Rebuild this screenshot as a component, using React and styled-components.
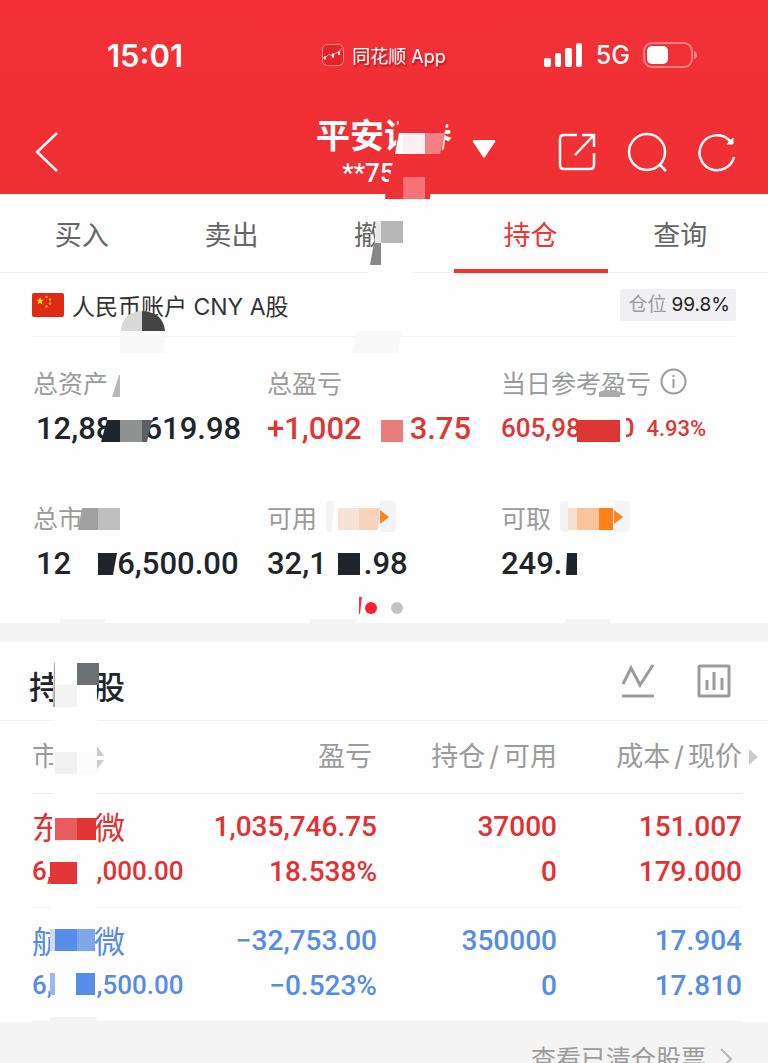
import React from 'react';
import styled, { createGlobalStyle } from 'styled-components';

const GlobalStyle = createGlobalStyle`
    * {
        box-sizing: border-box;
    }
    body {
        margin: 0;
        background: #f4f4f4;
        font-family: Inter, "Noto Sans CJK SC", sans-serif;
    }
    button {
        border: 0;
        padding: 0;
        background: none;
        font-family: inherit;
        cursor: pointer;
    }
`
const Page = styled.div`
    width: 100%;
    height: 100vh;
    overflow: hidden;
`
const Header = styled.header`
    position: relative;
    z-index: 1;
    color: white;
    background: linear-gradient(#f33038, #ef3033);
`
const StatusBar = styled.div`
    height: 110px;
    display: grid;
    grid-template-columns: 1fr auto 1fr;
    align-items: center;
    padding: 0 71px;
`
const Clock = styled.div`
    padding-left: 36px;
    font-size: 31px;
    font-weight: 600;
`
const AppName = styled.div`
    display: flex;
    align-items: center;
    gap: 8px;
    font-size: 18px;
    text-shadow: 1px 2px 2px rgba(90, 0, 0, 0.5);
`
const Signals = styled.div`
    display: flex;
    align-items: center;
    justify-content: flex-end;
    gap: 13px;
    font-size: 25px;
    font-weight: 500;
`
const NavBar = styled.div`
    height: 84px;
    display: grid;
    grid-template-columns: 1fr auto 1fr;
    align-items: center;
    padding: 0 31px 0 35px;
`
const IconButton = styled.button`
    display: flex;
    color: inherit;
`
const Account = styled.button`
    display: flex;
    align-items: center;
    gap: 20px;
    padding-left: 40px;
    color: inherit;
`
const AccountName = styled.div`
    font-size: 34px;
    line-height: 42px;
    font-weight: 700;
`
const AccountNumber = styled.div`
    padding-left: 26px;
    text-align: left;
    font-family: Roboto, sans-serif;
    font-size: 26px;
    line-height: 32px;
    font-weight: 500;
`
const NavActions = styled.div`
    display: flex;
    justify-content: flex-end;
    gap: 30px;
`
const Panel = styled.section`
    position: relative;
    background: #fefefe;
`
const Tabs = styled.nav`
    height: 79px;
    display: flex;
    padding: 0 13px 0 7px;
    border-bottom: 1px solid #efefef;
`
const Tab = styled.button`
    flex: 1 1 0;
    min-width: 0;
    height: 79px;
    display: flex;
    flex-direction: column;
    align-items: center;
    font-size: 27px;
    line-height: 84px;
    color: ${props => props.$active ? '#f03433' : '#666'};
    &::after {
        content: '';
        width: 154px;
        height: 4px;
        margin-top: -9px;
        flex-shrink: 0;
        background: ${props => props.$active ? '#f03433' : 'transparent'};
    }
`
const AccountRow = styled.div`
    height: 64px;
    margin: 0 32px;
    display: flex;
    align-items: center;
    gap: 8px;
    border-bottom: 1px solid #f4f4f4;
    font-size: 23px;
    color: #333;
`
const Position = styled.div`
    margin-left: auto;
    display: flex;
    gap: 5px;
    padding: 0 6px 0 8px;
    border-radius: 3px;
    background: #f0f0f2;
    font-size: 19px;
    line-height: 32px;
    color: #222;
`
const Muted = styled.span`
    color: #9b9b9b;
`
const Stats = styled.div`
    display: grid;
    grid-template-columns: repeat(3, 1fr);
    row-gap: 42px;
    padding: 21px 33px 0;
`
const StatLabel = styled.div`
    height: 47px;
    display: flex;
    align-items: center;
    gap: 9px;
    font-size: 25px;
    color: #9b9b9b;
    white-space: nowrap;
`
const StatValue = styled.div`
    height: 46px;
    padding-left: ${props => props.$indent ? 3 : 0}px;
    display: flex;
    align-items: center;
    font-family: Roboto, sans-serif;
    font-size: ${props => props.$small ? 26 : 31}px;
    font-weight: 500;
    color: ${props => props.$up ? '#dd3735' : '#20252b'};
    white-space: pre;
`
const Percent = styled.span`
    margin-left: 12px;
    font-size: 22px;
`
const Hidden = styled.span`
    display: inline-block;
    width: ${props => props.$w}px;
`
const Tag = styled.button`
    width: 70px;
    height: 31px;
    padding-right: 7px;
    display: flex;
    align-items: center;
    justify-content: flex-end;
    border-radius: 4px;
    background: #f4f4f4;
`
const Dots = styled.div`
    height: 37px;
    display: flex;
    justify-content: center;
    align-items: center;
    gap: 14px;
    padding-top: 7px;
`
const Dot = styled.span`
    width: 12px;
    height: 12px;
    border-radius: 50%;
    background: ${props => props.$active ? '#fd2036' : '#c2c2c2'};
`
const Band = styled.div`
    height: 19px;
    background: #f4f4f4;
`
const HoldingsHead = styled.div`
    height: 79px;
    display: flex;
    align-items: center;
    gap: 42px;
    padding: 0 37px 0 29px;
    border-bottom: 1px solid #f1f1f1;
`
const HoldingsTitle = styled.h2`
    margin: 0 auto 0 0;
    padding-top: 8px;
    font-size: 32px;
    font-weight: 500;
    color: #20252b;
`
const TableWrap = styled.div`
    padding: 0 26px 0 32px;
`
const Table = styled.table`
    width: 100%;
    table-layout: fixed;
    border-collapse: separate;
    border-spacing: 0;
`
const HeadCell = styled.th`
    position: relative;
    width: ${props => props.$w ? props.$w + 'px' : 'auto'};
    height: 73px;
    padding: 0 ${props => props.$inset || 0}px 0 0;
    border-bottom: 1px solid #ececec;
    font-size: 27px;
    font-weight: 400;
    line-height: 36px;
    color: #9b9b9b;
    white-space: nowrap;
    text-align: ${props => props.$w ? 'right' : 'left'};
`
const Slash = styled.span`
    padding: 0 4px;
`
const More = styled.span`
    position: absolute;
    right: -16px;
    top: 0;
    height: 72px;
    display: flex;
    align-items: center;
`
const Cell = styled.td`
    padding: 10px 0 13px;
    border-bottom: 1px solid #f3f3f3;
    font-family: Roboto, "Noto Sans CJK SC", sans-serif;
    font-size: 28px;
    font-weight: 500;
    line-height: 45px;
    text-align: right;
    color: ${props => props.$up ? '#e23133' : '#578ce6'};
    white-space: nowrap;
`
const StockCell = styled(Cell)`
    text-align: left;
    font-size: 26px;
`
const StockName = styled.div`
    height: 45px;
    font-size: 31px;
    line-height: 49px;
    font-weight: 400;
`
const Footer = styled.footer`
    display: flex;
    justify-content: flex-end;
    padding: 17px 36px;
`
const FooterLink = styled.a`
    display: flex;
    align-items: center;
    gap: 14px;
    font-size: 25px;
    line-height: 40px;
    color: #9b9b9b;
    text-decoration: none;
`
const MosaicSvg = styled.svg`
    position: absolute;
    left: 0;
    top: 0;
    overflow: visible;
    pointer-events: none;
`

// privacy blocks lying over the sensitive values; [points, colour]
const headerBlocks = [
    ['399,118 447,118 441,155 395,155', '#f03036'],
    ['395,154 399,133 403,133 403,154', '#ffffff'],
    ['403,133 425,133 425,154 403,154', '#fdf0f1'],
    ['425,133 445,133 440,154 425,154', '#f58084'],
    ['393,162 432,162 430,199 385,199 386,186 388,184', '#ef3034'],
    ['403,177 425,177 425,199 403,199', '#f77276'],
]
const panelBlocks = [
    ['377,219 404,219 404,270 372,270', '#fefefe'],
    ['376,221 381,221 381,243 375,243', '#e8e8e8'],
    ['381,221 403,221 403,243 381,243', '#b7b7b7'],
    ['374,243 381,243 381,265 370,265', '#888888'],
    ['368,270 413,270 413,275 368,275', '#fefefe'],
    ['120,331 165,331 165,353 120,353', '#f9f9f9'],
    ['357,331 402,331 398,353 351,353', '#f9f9f9'],
    ['119,375 120,375 120,397 112,397', '#b9b9b9'],
    ['107,412 155,412 152,421 107,421', '#fefefe'],
    ['107,420 120,420 120,442 101,442', '#20252b'],
    ['120,420 142,420 142,442 120,442', '#909192'],
    ['142,420 152,420 147,442 142,442', '#5d5f62'],
    ['381,420 403,420 403,442 381,442', '#e87d7c'],
    ['599,392 605,390 615,390 620,392 620,397 599,397', '#ababab'],
    ['577,420 620,420 620,442 577,442', '#dd3735'],
    ['620,416 626,416 626,442 620,442', '#fefefe'],
    ['82,508 98,508 98,530 78,530', '#a0a0a0'],
    ['98,508 120,508 120,530 98,530', '#bfbfbf'],
    ['98,553 117,553 113,575 98,575', '#20252b'],
    ['335,500 380,500 380,533 331,533', '#fefefe'],
    ['338,508 359,508 359,530 338,530', '#f5e3d5'],
    ['359,508 380,508 378,530 359,530', '#f6d4bc'],
    ['338,553 360,553 360,575 338,575', '#20252b'],
    ['568,500 614,500 614,533 568,533', '#fefefe'],
    ['568,508 577,508 577,530 568,530', '#f5e0d0'],
    ['577,508 599,508 599,530 577,530', '#f8c49c'],
    ['599,508 613,508 613,530 599,530', '#ff7f18'],
    ['567,553 577,553 577,575 566,575', '#20252b'],
    ['359,597 362,597 360,614 359,614', '#f9344a'],
    ['60,619 105,619 105,623 60,623', '#f4f4f4'],
    ['310,619 357,619 357,623 310,623', '#f4f4f4'],
    ['565,619 610,619 610,623 565,623', '#f4f4f4'],
]
const holdingsBlocks = [
    ['53,663 97,663 97,715 53,715', '#fefefe'],
    ['54,663 55,663 55,707 53,707', '#a9a9a9'],
    ['77,663 99,663 99,685 77,685', '#6b7073'],
    ['55,685 77,685 77,707 55,707', '#f3f3f3'],
    ['53,715 97,715 97,798 53,798', '#fefefe'],
    ['55,752 77,752 77,774 55,774', '#f1f1f1'],
    ['77,752 97,752 97,774 77,774', '#fbfbfb'],
    ['97,746 104,756 97,756', '#cccccc'],
    ['97,760 104,760 97,769', '#cccccc'],
    ['52,812 96,812 96,845 52,845', '#fefefe'],
    ['55,818 77,818 77,840 55,840', '#e75c5d'],
    ['77,818 96,818 96,840 77,840', '#e23435'],
    ['50,862 77,862 77,884 50,884', '#e23739'],
    ['50,904 95,904 95,910 50,910', '#fefefe'],
    ['50,925 95,925 95,960 50,960', '#fefefe'],
    ['50,929 55,929 55,951 50,951', '#cfdcf6'],
    ['55,929 77,929 77,951 55,951', '#578ce9'],
    ['77,929 95,929 95,951 77,951', '#7fa5ec'],
    ['50,973 55,973 55,995 50,995', '#9ab8f1'],
    ['76,973 95,973 95,995 76,995', '#578ce9'],
    ['50,1017 97,1017 96,1022 50,1022', '#f4f4f4'],
]

const tabs = ['买入', '卖出', '撤', '持仓', '查询']

const holdings = [
    { first: '东', last: '微', tail: ',000.00', profit: '1,035,746.75', rate: '18.538%', amount: '37000', usable: '0', cost: '151.007', price: '179.000', up: true },
    { first: '航', last: '微', tail: ',500.00', profit: '−32,753.00', rate: '−0.523%', amount: '350000', usable: '0', cost: '17.904', price: '17.810', up: false },
]

function Mosaic({ top, blocks, children }) {
    return (
        <MosaicSvg width="768" height="100" viewBox={`0 ${top} 768 100`} aria-hidden="true">
            {blocks.map(([points, fill], index) => <polygon key={'block' + index} points={points} fill={fill} />)}
            {children}
        </MosaicSvg>
    )
}

function Flag() {
    return (
        <svg width="32" height="24" viewBox="0 0 32 24">
            <rect width="32" height="24" rx="2" fill="#df2a14" />
            <path d="M8 4l1 2.800h3L9.600 8.600l.9 2.900L8 9.700l-2.500 1.800.9-2.900L4 6.800h3z" fill="#ffde00" />
            <g fill="#f6a913">
                <circle cx="14.500" cy="4" r="1.200" />
                <circle cx="18" cy="6.500" r="1.200" />
                <circle cx="18" cy="10.500" r="1.200" />
                <circle cx="14.500" cy="13.500" r="1.200" />
            </g>
        </svg>
    )
}

function OrangeArrow() {
    return (
        <svg width="9" height="14" viewBox="0 0 9 14">
            <path d="M0 0l9 7-9 7z" fill="#fd8420" />
        </svg>
    )
}

export default function App() {
    return (
        <Page>
            <GlobalStyle />
            <Header>
                <StatusBar>
                    <Clock>15:01</Clock>
                    <AppName>
                        <svg width="22" height="22" viewBox="0 0 22 22" fill="none">
                            <rect x="0.500" y="0.500" width="21" height="21" rx="5" fill="#e62328" stroke="#fa8a8c" />
                            <path d="M1 14l3-1 3-3 3 2 4-3 3-1 3-4" stroke="#f9b0b0" />
                            <path d="M3 12.500v3M11 9.500v4M17 7v4" stroke="#fff" strokeWidth="2" />
                        </svg>
                        <span>同花顺 App</span>
                    </AppName>
                    <Signals>
                        <svg width="39" height="24" viewBox="0 0 39 24" fill="#fff">
                            <rect x="0" y="15" width="7" height="9" rx="2" />
                            <rect x="11" y="10" width="6" height="14" rx="2" />
                            <rect x="21" y="5" width="7" height="19" rx="2" />
                            <rect x="32" y="0" width="6" height="24" rx="2" />
                        </svg>
                        <span>5G</span>
                        <svg width="54" height="26" viewBox="0 0 54 26" fill="none">
                            <rect x="1" y="1" width="48" height="24" rx="8" stroke="#f98184" strokeWidth="2" />
                            <rect x="4" y="4" width="21" height="18" rx="5" fill="#fff" />
                            <path d="M51 9q3 1 3 4t-3 4z" fill="#f98184" />
                        </svg>
                    </Signals>
                </StatusBar>
                <NavBar>
                    <IconButton aria-label="返回">
                        <svg width="24" height="40" viewBox="0 0 24 40" fill="none" stroke="#fff" strokeWidth="2.500">
                            <path d="M22 1L2 20l20 19" />
                        </svg>
                    </IconButton>
                    <Account>
                        <div>
                            <AccountName>平安证券</AccountName>
                            <AccountNumber>**75</AccountNumber>
                        </div>
                        <svg width="24" height="26" viewBox="0 0 24 26">
                            <path d="M2 1h20q2 0 1 2L13 18q-1 1-2 0L1 3q-1-2 1-2z" fill="#fff" />
                        </svg>
                    </Account>
                    <NavActions>
                        <IconButton aria-label="分享">
                            <svg width="40" height="40" viewBox="0 0 40 40" fill="none" stroke="#fff" strokeWidth="2.500">
                                <path d="M20 3H7q-4 0-4 4v26q0 4 4 4h26q4 0 4-4V21M25 3h12v12M37 3L18 23" />
                            </svg>
                        </IconButton>
                        <IconButton aria-label="搜索">
                            <svg width="40" height="40" viewBox="0 0 40 40" fill="none" stroke="#fff" strokeWidth="2.500">
                                <circle cx="20" cy="20" r="18" />
                                <path d="M32 32l7 7" />
                            </svg>
                        </IconButton>
                        <IconButton aria-label="刷新">
                            <svg width="40" height="40" viewBox="0 0 40 40" fill="none" stroke="#fff" strokeWidth="2.500">
                                <path d="M37 25A17.500 17.500 0 1 1 32 8l3 3" />
                                <path d="M36 6v6h-6z" fill="#fff" strokeWidth="1" />
                            </svg>
                        </IconButton>
                    </NavActions>
                </NavBar>
                <Mosaic top={0} blocks={headerBlocks} />
            </Header>
            <Panel>
                <Tabs>
                    {tabs.map((name, index) => (
                        <Tab key={'tab' + index} $active={name === '持仓'}>
                            <span>{name}{name === '撤' ? <Hidden $w={27} /> : null}</span>
                        </Tab>
                    ))}
                </Tabs>
                <AccountRow>
                    <Flag />
                    <span>人民币账户 CNY A股</span>
                    <Position><Muted>仓位</Muted>99.8%</Position>
                </AccountRow>
                <Stats>
                    <div>
                        <StatLabel>总资产</StatLabel>
                        <StatValue $indent>12,88<Hidden $w={31} />619.98</StatValue>
                    </div>
                    <div>
                        <StatLabel>总盈亏</StatLabel>
                        <StatValue $up>+1,002<Hidden $w={48} />3.75</StatValue>
                    </div>
                    <div>
                        <StatLabel>
                            当日参考盈亏
                            <svg width="27" height="27" viewBox="0 0 27 27" fill="none" stroke="#9b9b9b" strokeWidth="2">
                                <circle cx="13.500" cy="13.500" r="12" />
                                <path d="M13.500 11v9M13.500 7v2" />
                            </svg>
                        </StatLabel>
                        <StatValue $up $small>605,98<Hidden $w={39} />0<Percent>4.93%</Percent></StatValue>
                    </div>
                    <div>
                        <StatLabel>总市</StatLabel>
                        <StatValue $indent>12<Hidden $w={46} />6,500.00</StatValue>
                    </div>
                    <div>
                        <StatLabel>可用<Tag aria-label="可用"><OrangeArrow /></Tag></StatLabel>
                        <StatValue>32,1<Hidden $w={37} />.98</StatValue>
                    </div>
                    <div>
                        <StatLabel>可取<Tag aria-label="可取"><OrangeArrow /></Tag></StatLabel>
                        <StatValue>249.</StatValue>
                    </div>
                </Stats>
                <Dots>
                    <Dot $active />
                    <Dot />
                </Dots>
                <Mosaic top={194} blocks={panelBlocks}>
                    <path d="M121 331Q122 312 142 311V331Z" fill="#d8d8d8" />
                    <path d="M142 311Q163 312 165 331H142Z" fill="#444" />
                </Mosaic>
            </Panel>
            <Band />
            <Panel>
                <HoldingsHead>
                    <HoldingsTitle>持<Hidden $w={32} />股</HoldingsTitle>
                    <IconButton aria-label="走势">
                        <svg width="34" height="34" viewBox="0 0 34 34" fill="none" stroke="#9b9b9b" strokeWidth="3">
                            <path d="M2 20l8-16 9 17L32 1M1 32h32" />
                        </svg>
                    </IconButton>
                    <IconButton aria-label="统计">
                        <svg width="34" height="34" viewBox="0 0 34 34" fill="none" stroke="#9b9b9b" strokeWidth="3">
                            <rect x="2" y="2" width="30" height="30" rx="1" />
                            <path d="M10 16v10M17 8v18M25 14v12" />
                        </svg>
                    </IconButton>
                </HoldingsHead>
                <TableWrap>
                    <Table>
                        <thead>
                            <tr>
                                <HeadCell>市</HeadCell>
                                <HeadCell $w={180} $inset={5}>盈亏</HeadCell>
                                <HeadCell $w={180}>持仓<Slash>/</Slash>可用</HeadCell>
                                <HeadCell $w={185}>
                                    成本<Slash>/</Slash>现价
                                    <More>
                                        <svg width="9" height="16" viewBox="0 0 9 16">
                                            <path d="M0 0l9 8-9 8z" fill="#ccc" />
                                        </svg>
                                    </More>
                                </HeadCell>
                            </tr>
                        </thead>
                        <tbody>
                            {holdings.map((item, index) => (
                                <tr key={'holding' + index}>
                                    <StockCell $up={item.up}>
                                        <StockName>{item.first}<Hidden $w={31} />{item.last}</StockName>
                                        <div>6,<Hidden $w={44} />{item.tail}</div>
                                    </StockCell>
                                    <Cell $up={item.up}>
                                        <div>{item.profit}</div>
                                        <div>{item.rate}</div>
                                    </Cell>
                                    <Cell $up={item.up}>
                                        <div>{item.amount}</div>
                                        <div>{item.usable}</div>
                                    </Cell>
                                    <Cell $up={item.up}>
                                        <div>{item.cost}</div>
                                        <div>{item.price}</div>
                                    </Cell>
                                </tr>
                            ))}
                        </tbody>
                    </Table>
                </TableWrap>
                <Mosaic top={642} blocks={holdingsBlocks} />
            </Panel>
            <Footer>
                <FooterLink href="#cleared">
                    查看已清仓股票
                    <svg width="12" height="22" viewBox="0 0 12 22" fill="none" stroke="#b5b5b5" strokeWidth="2">
                        <path d="M1 1l10 10L1 21" />
                    </svg>
                </FooterLink>
            </Footer>
        </Page>
    )
}
